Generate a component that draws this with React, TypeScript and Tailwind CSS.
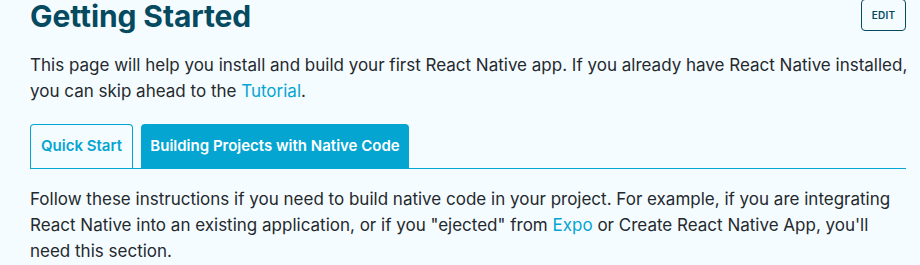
import React from 'react';

const App: React.FC = () => {
  return (
    <div className="w-[920px] h-[265px] bg-[#f5fcff] overflow-hidden font-['Inter','Noto_Sans',sans-serif] text-[#24292e]">
      <div className="pl-[30px] w-[906px]">
        {/* Header */}
        <div className="flex items-start justify-between">
          <h1 className="text-[30px] leading-[32px] font-bold text-[#064a5f] tracking-[-0.1px]">Getting Started</h1>
          <button className="w-[45px] h-[32px] -mt-px border border-[#064a5f] rounded-[4px] text-[10px] font-semibold text-[#064a5f] tracking-wide">
            EDIT
          </button>
        </div>

        <p className="mt-[20px] mr-[-8px] text-[17px] leading-[26px]">
          This page will help you install and build your first React Native app. If you already have React Native installed,
          you can skip ahead to the <a className="text-[#05a5d1]">Tutorial</a>.
        </p>

        {/* Tabs */}
        <div className="mt-[20px] flex gap-[8px] border-b border-[#05a5d1]">
          <div className="h-[44px] w-[103px] flex items-center justify-center border border-b-0 border-[#05a5d1] rounded-t-[4px] text-[15px] font-semibold text-[#05a5d1]">
            Quick Start
          </div>
          <div className="h-[44px] w-[268px] flex items-center justify-center bg-[#05a5d1] rounded-t-[4px] text-[15px] font-semibold text-white">
            Building Projects with Native Code
          </div>
        </div>

        <p className="mt-[17px] text-[17px] leading-[26px]">
          Follow these instructions if you need to build native code in your project. For example, if you are integrating
          React Native into an existing application, or if you "ejected" from <a className="text-[#05a5d1]">Expo</a> or Create React Native App, you'll
          need this section.
        </p>
      </div>
    </div>
  );
};

export default App;
